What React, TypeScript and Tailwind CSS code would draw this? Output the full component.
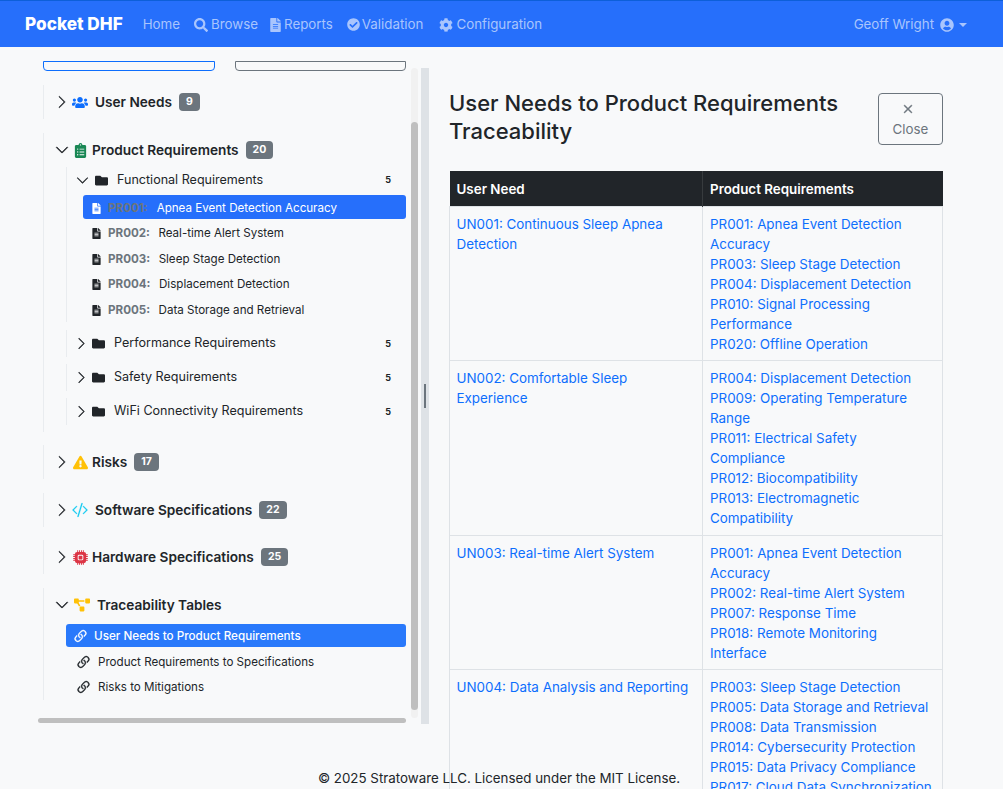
import { ReactNode } from 'react';
import { BsChevronDown, BsChevronRight, BsCodeSlash, BsCpuFill, BsLink45Deg, BsX } from 'react-icons/bs';
import {
  FaCheckCircle,
  FaClipboardList,
  FaCog,
  FaExclamationTriangle,
  FaFileAlt,
  FaFolder,
  FaProjectDiagram,
  FaSearch,
  FaUserCircle,
  FaUsers,
} from 'react-icons/fa';

const navItems = [
  { label: 'Browse', icon: <FaSearch className="text-[14px]" />, className: 'mr-[12px] gap-[3px]' },
  { label: 'Reports', icon: <FaFileAlt className="h-[14px] w-[11px]" />, className: 'mr-[14px] gap-[3px]' },
  { label: 'Validation', icon: <FaCheckCircle className="text-[13px]" />, className: 'mr-[16px] gap-[2px]' },
  { label: 'Configuration', icon: <FaCog className="text-[14px]" />, className: 'mr-[13px] gap-[3px]' },
];

const functionalItems = [
  ['PR001:', 'Apnea Event Detection Accuracy'],
  ['PR002:', 'Real-time Alert System'],
  ['PR003:', 'Sleep Stage Detection'],
  ['PR004:', 'Displacement Detection'],
  ['PR005:', 'Data Storage and Retrieval'],
];

const tableRows = [
  {
    need: 'UN001: Continuous Sleep Apnea Detection',
    pad: 'pb-[6px]',
    reqs: [
      'PR001: Apnea Event Detection Accuracy',
      'PR003: Sleep Stage Detection',
      'PR004: Displacement Detection',
      'PR010: Signal Processing Performance',
      'PR020: Offline Operation',
    ],
  },
  {
    need: 'UN002: Comfortable Sleep Experience',
    pad: 'pb-[7px]',
    reqs: [
      'PR004: Displacement Detection',
      'PR009: Operating Temperature Range',
      'PR011: Electrical Safety Compliance',
      'PR012: Biocompatibility',
      'PR013: Electromagnetic Compatibility',
    ],
  },
  {
    need: 'UN003: Real-time Alert System',
    pad: 'pb-[6px]',
    reqs: [
      'PR001: Apnea Event Detection Accuracy',
      'PR002: Real-time Alert System',
      'PR007: Response Time',
      'PR018: Remote Monitoring Interface',
    ],
  },
  {
    need: 'UN004: Data Analysis and Reporting',
    pad: 'pb-[6px]',
    reqs: [
      'PR003: Sleep Stage Detection',
      'PR005: Data Storage and Retrieval',
      'PR008: Data Transmission',
      'PR014: Cybersecurity Protection',
      'PR015: Data Privacy Compliance',
      'PR017: Cloud Data Synchronization',
    ],
  },
];

function Badge({ children }: { children: ReactNode }) {
  return (
    <span className="ml-[7px] rounded-[4px] bg-[#6c757d] px-[7px] py-[4px] text-[10.5px] leading-[10px] font-bold text-white">
      {children}
    </span>
  );
}

function Section({
  open,
  icon,
  title,
  count,
  titleGap,
}: {
  open?: boolean;
  icon: ReactNode;
  title: string;
  count?: number;
  titleGap: string;
}) {
  return (
    <div className="flex h-[34px] items-center pl-[11px] text-[13.65px] font-semibold text-[#212529]">
      {open ? (
        <BsChevronDown className="w-[14px] text-[14px] [&_path]:stroke-current [&_path]:stroke-[0.6]" />
      ) : (
        <BsChevronRight className="w-[14px] text-[14px] [&_path]:stroke-current [&_path]:stroke-[0.6]" />
      )}
      <span className={`ml-[3px] flex w-[16px] justify-center ${titleGap}`}>{icon}</span>
      {title}
      {count !== undefined && <Badge>{count}</Badge>}
    </div>
  );
}

function Folder({ name, open }: { name: string; open?: boolean }) {
  return (
    <div className={`flex items-center text-[12.55px] text-[#212529] ${open ? 'h-[26px]' : 'h-[27px]'}`}>
      {open ? (
        <BsChevronDown className="ml-[9px] text-[13px] [&_path]:stroke-current [&_path]:stroke-[0.6]" />
      ) : (
        <BsChevronRight className="ml-[8px] text-[13px] [&_path]:stroke-current [&_path]:stroke-[0.6]" />
      )}
      <FaFolder className={open ? 'mr-[9px] ml-[6px] text-[13px]' : 'mr-[9px] ml-[4px] text-[13px]'} />
      <span>{name}</span>
      <span className="mr-[15px] ml-auto text-[9px] font-bold">5</span>
    </div>
  );
}

function App() {
  return (
    <div className="relative h-[789px] overflow-hidden bg-[#f8f9fa] font-['Inter',sans-serif] text-[#212529] antialiased">
      <header className="flex h-[47px] items-center border-t border-[#0d5fd9] bg-[#266ffb] pr-[36px] pl-[25px] text-[13.33px] text-[#a9c5fd]">
        <span className="mr-[20px] text-[17.2px] font-extrabold text-white">Pocket DHF</span>
        <nav className="mt-[2px] flex items-center">
          <span className="mr-[14px]">Home</span>
          {navItems.map((item) => (
            <span key={item.label} className={`flex items-center ${item.className}`}>
              {item.icon}
              {item.label}
            </span>
          ))}
        </nav>
        <span className="mt-[2px] ml-auto flex items-center gap-[6px]">
          Geoff Wright
          <FaUserCircle className="text-[14px]" />
          <span className="-ml-[1px] h-0 w-0 border-x-[4px] border-t-[4px] border-x-transparent border-t-[#a9c5fd]" />
        </span>
      </header>

      <main className="flex pt-[21px] pl-[38px]">
        <div className="flex h-[656px]">
          <div className="flex w-[373px] flex-col pl-[5px]">
            <div className="flex h-[3px] items-end gap-[20px] pr-[5px]">
              <div className="h-[10px] flex-1 rounded-b-[4px] border border-[#0d6efd]" />
              <div className="h-[10px] flex-1 rounded-b-[4px] border border-[#6c757d]" />
            </div>

            <div className="mt-[14px] border-l border-[#e9ecef]">
              <Section
                icon={<FaUsers className="text-[17px] text-[#0d6efd]" />}
                title="User Needs"
                count={9}
                titleGap="mr-[7px]"
              />
            </div>

            <div className="mt-[14px] h-[299px] border-l border-[#e9ecef]">
              <Section
                open
                icon={<FaClipboardList className="text-[15px] text-[#198754]" />}
                title="Product Requirements"
                count={20}
                titleGap="mr-[4px]"
              />
              <div className="ml-[22px] w-[340px]">
                <div className="border-l border-[#e9ecef]">
                  <Folder name="Functional Requirements" open />
                  <div className="mt-[2px] ml-[16px] text-[11.6px]">
                    {functionalItems.map(([code, title], i) => (
                      <div
                        key={code}
                        className={`flex items-center pt-[3px] pl-[9px] ${i === 0 ? 'h-[24px] rounded-[3px] bg-[#266ffb] text-white' : 'h-[25.8px]'}`}
                      >
                        <FaFileAlt className="mr-[7px] h-[11px] w-[9px]" />
                        <span className={`font-bold text-[#6c757d] ${i === 0 ? 'mr-[9px]' : 'mr-[8.5px]'}`}>{code}</span>
                        <span>{title}</span>
                      </div>
                    ))}
                  </div>
                </div>
                <div className="mt-[8px] flex flex-col gap-[7px]">
                  {['Performance Requirements', 'Safety Requirements', 'WiFi Connectivity Requirements'].map((name) => (
                    <div key={name} className="border-l border-[#e9ecef]">
                      <Folder name={name} />
                    </div>
                  ))}
                </div>
              </div>
            </div>

            <div className="mt-[13px] border-l border-[#e9ecef]">
              <Section
                icon={<FaExclamationTriangle className="text-[15px] text-[#ffc107]" />}
                title="Risks"
                count={17}
                titleGap="mr-[4px]"
              />
            </div>
            <div className="mt-[14px] border-l border-[#e9ecef]">
              <Section
                icon={<BsCodeSlash className="text-[18px] text-[#0dcaf0] [&_path]:stroke-current [&_path]:stroke-[0.3]" />}
                title="Software Specifications"
                count={22}
                titleGap="mr-[7px]"
              />
            </div>
            <div className="mt-[13px] border-l border-[#e9ecef]">
              <Section
                icon={<BsCpuFill className="text-[15px] text-[#dc3545]" />}
                title="Hardware Specifications"
                count={25}
                titleGap="mr-[4px]"
              />
            </div>

            <div className="mt-[14px] h-[112px] border-l border-[#e9ecef]">
              <Section
                open
                icon={<FaProjectDiagram className="ml-[4px] shrink-0 text-[16px] text-[#ffc107]" />}
                title="Traceability Tables"
                titleGap="mr-[9px]"
              />
              <div className="mt-[2px] ml-[22px] w-[340px]">
                <div className="flex h-[23px] items-center rounded-[3px] bg-[#2979fb] pt-[2px] pl-[6px] text-[11.7px] font-medium text-white">
                  <BsLink45Deg className="mr-[5px] text-[17px] [&_path]:stroke-current [&_path]:stroke-[0.3]" />
                  User Needs to Product Requirements
                </div>
                <div className="mt-[2px] flex h-[25px] items-center pt-[2px] pl-[9px] text-[11.6px]">
                  <BsLink45Deg className="mr-[6px] text-[17px] [&_path]:stroke-current [&_path]:stroke-[0.3]" />
                  Product Requirements to Specifications
                </div>
                <div className="flex h-[25px] items-center pt-[2px] pl-[9px] text-[11.6px]">
                  <BsLink45Deg className="mr-[6px] text-[17px] [&_path]:stroke-current [&_path]:stroke-[0.3]" />
                  Risks to Mitigations
                </div>
              </div>
            </div>

            <div className="mt-[18px] -ml-[5px] h-[5px] w-[368px] rounded-full bg-[#bfbfbf]" />
          </div>

          <div className="h-[650px] w-[7px] rounded-full bg-[#f1f1f1] pt-[54px]">
            <div className="h-[588px] rounded-full bg-[#bfbfbf]" />
          </div>

          <div className="ml-[3px] flex h-[656px] w-[8px] items-center justify-center bg-[#dee2e6]">
            <div className="h-[24px] w-[2px] bg-[#6c757d]" />
          </div>
        </div>

        <div className="ml-[20px] w-[494px]">
          <div className="flex items-start justify-between pt-[21px]">
            <h1 className="w-[420px] text-[22px] leading-[28px] font-medium text-[#212529]">
              User Needs to Product Requirements Traceability
            </h1>
            <button className="mt-[4px] flex h-[52px] w-[65px] flex-col items-center rounded-[4px] border border-[#6c757d] pt-[6px] text-[13.33px] leading-[21px] text-[#6c757d]">
              <BsX className="mr-[6px] mb-[1px] text-[18px] [&_path]:stroke-current [&_path]:stroke-[0.4]" />
              Close
            </button>
          </div>

          <table className="mt-[26px] w-full table-fixed border-collapse text-[13.4px] leading-[20px]">
            <thead>
              <tr className="bg-[#212529] text-white">
                <th className="w-[253px] border-r border-[#373b3e] py-[7.5px] pr-[8px] pl-[7px] text-left font-semibold">User Need</th>
                <th className="px-[7px] py-[7.5px] text-left font-semibold">Product Requirements</th>
              </tr>
            </thead>
            <tbody className="text-[#0d6efd]">
              {tableRows.map((row) => (
                <tr key={row.need}>
                  <td className={`border border-[#dee2e6] pt-[7px] pr-[7px] pl-[6.5px] align-top ${row.pad}`}>{row.need}</td>
                  <td className={`border border-[#dee2e6] pt-[7px] pr-[9px] pl-[7px] align-top ${row.pad}`}>
                    {row.reqs.map((req) => (
                      <div key={req}>{req}</div>
                    ))}
                  </td>
                </tr>
              ))}
            </tbody>
          </table>
        </div>
      </main>

      <div className="absolute right-0 bottom-[2px] left-0 pr-[5px] text-center text-[13.33px] leading-[18px] text-[#212529]">
        © 2025 Stratoware LLC. Licensed under the MIT License.
      </div>
    </div>
  );
}

export default App;
